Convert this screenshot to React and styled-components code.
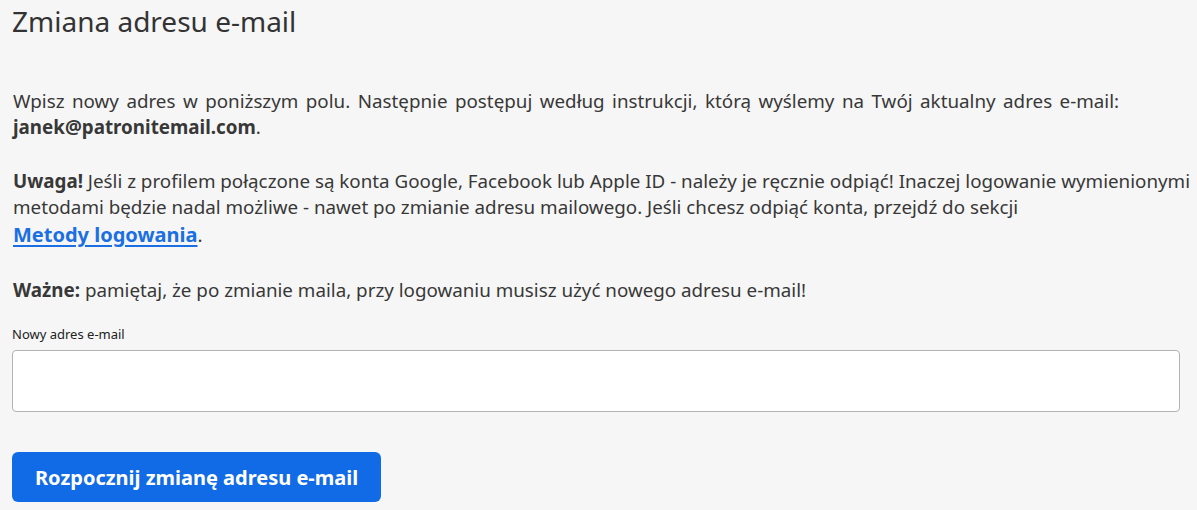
import styled, { createGlobalStyle } from "styled-components";

const GlobalStyle = createGlobalStyle`
  body {
    margin: 0;
    background: #f6f6f6;
    font-family: "Noto Sans", "Open Sans", sans-serif;
    color: #383838;
  }
`

const Page = styled.div`
  padding: 0 4px 0 12px;
`

const Title = styled.h1`
  margin: 0;
  padding-top: 3px;
  font-size: 28px;
  font-weight: 400;
  line-height: 36px;
  color: #333;
`

const Text = styled.p`
  margin: 0;
  padding-left: 1px;
  font-size: 18.8px;
  line-height: 26px;
  margin-top: ${(p) => p.$top || 0}px;
  word-spacing: ${(p) => p.$spread || 0}px;
  b {
    font-weight: 700;
  }
`

const Link = styled.a`
  display: inline-block;
  font-size: 20px;
  line-height: 30px;
  font-weight: 700;
  color: #1a6fe3;
  text-decoration: underline;
  text-underline-offset: 3px;
  text-decoration-thickness: 2px;
`

const Label = styled.label`
  display: block;
  margin-top: 22px;
  font-size: 13px;
  line-height: 18px;
  color: #222;
`

const Input = styled.input`
  display: block;
  box-sizing: border-box;
  width: calc(100% - 13px);
  height: 62px;
  margin-top: 7px;
  border: 1px solid #b3b3b3;
  border-radius: 4px;
  background: #fff;
  font: inherit;
`

const Button = styled.button`
  display: block;
  margin-top: 40px;
  height: 50px;
  padding: 0 23px;
  border: none;
  border-radius: 6px;
  background: #116be6;
  color: #fff;
  font-family: inherit;
  font-size: 20px;
  font-weight: 700;
`

export default function App() {
  return (
    <Page>
      <GlobalStyle />
      <Title>Zmiana adresu e-mail</Title>
      <Text $top={49} $spread={2.6}>
        Wpisz nowy adres w poniższym polu. Następnie postępuj według instrukcji, którą wyślemy na Twój aktualny adres e-mail: <b>janek@patronitemail.com</b>.
      </Text>
      <Text $top={28}>
        <b>Uwaga!</b> Jeśli z profilem połączone są konta Google, Facebook lub Apple ID - należy je ręcznie odpiąć! Inaczej logowanie wymienionymi
        <br />
        metodami będzie nadal możliwe - nawet po zmianie adresu mailowego. Jeśli chcesz odpiąć konta, przejdź do sekcji
        <br />
        <Link href="#">Metody logowania</Link>.
      </Text>
      <Text $top={27}>
        <b>Ważne:</b> pamiętaj, że po zmianie maila, przy logowaniu musisz użyć nowego adresu e-mail!
      </Text>
      <Label htmlFor="email">Nowy adres e-mail</Label>
      <Input id="email" type="email" />
      <Button>Rozpocznij zmianę adresu e-mail</Button>
    </Page>
  );
}
